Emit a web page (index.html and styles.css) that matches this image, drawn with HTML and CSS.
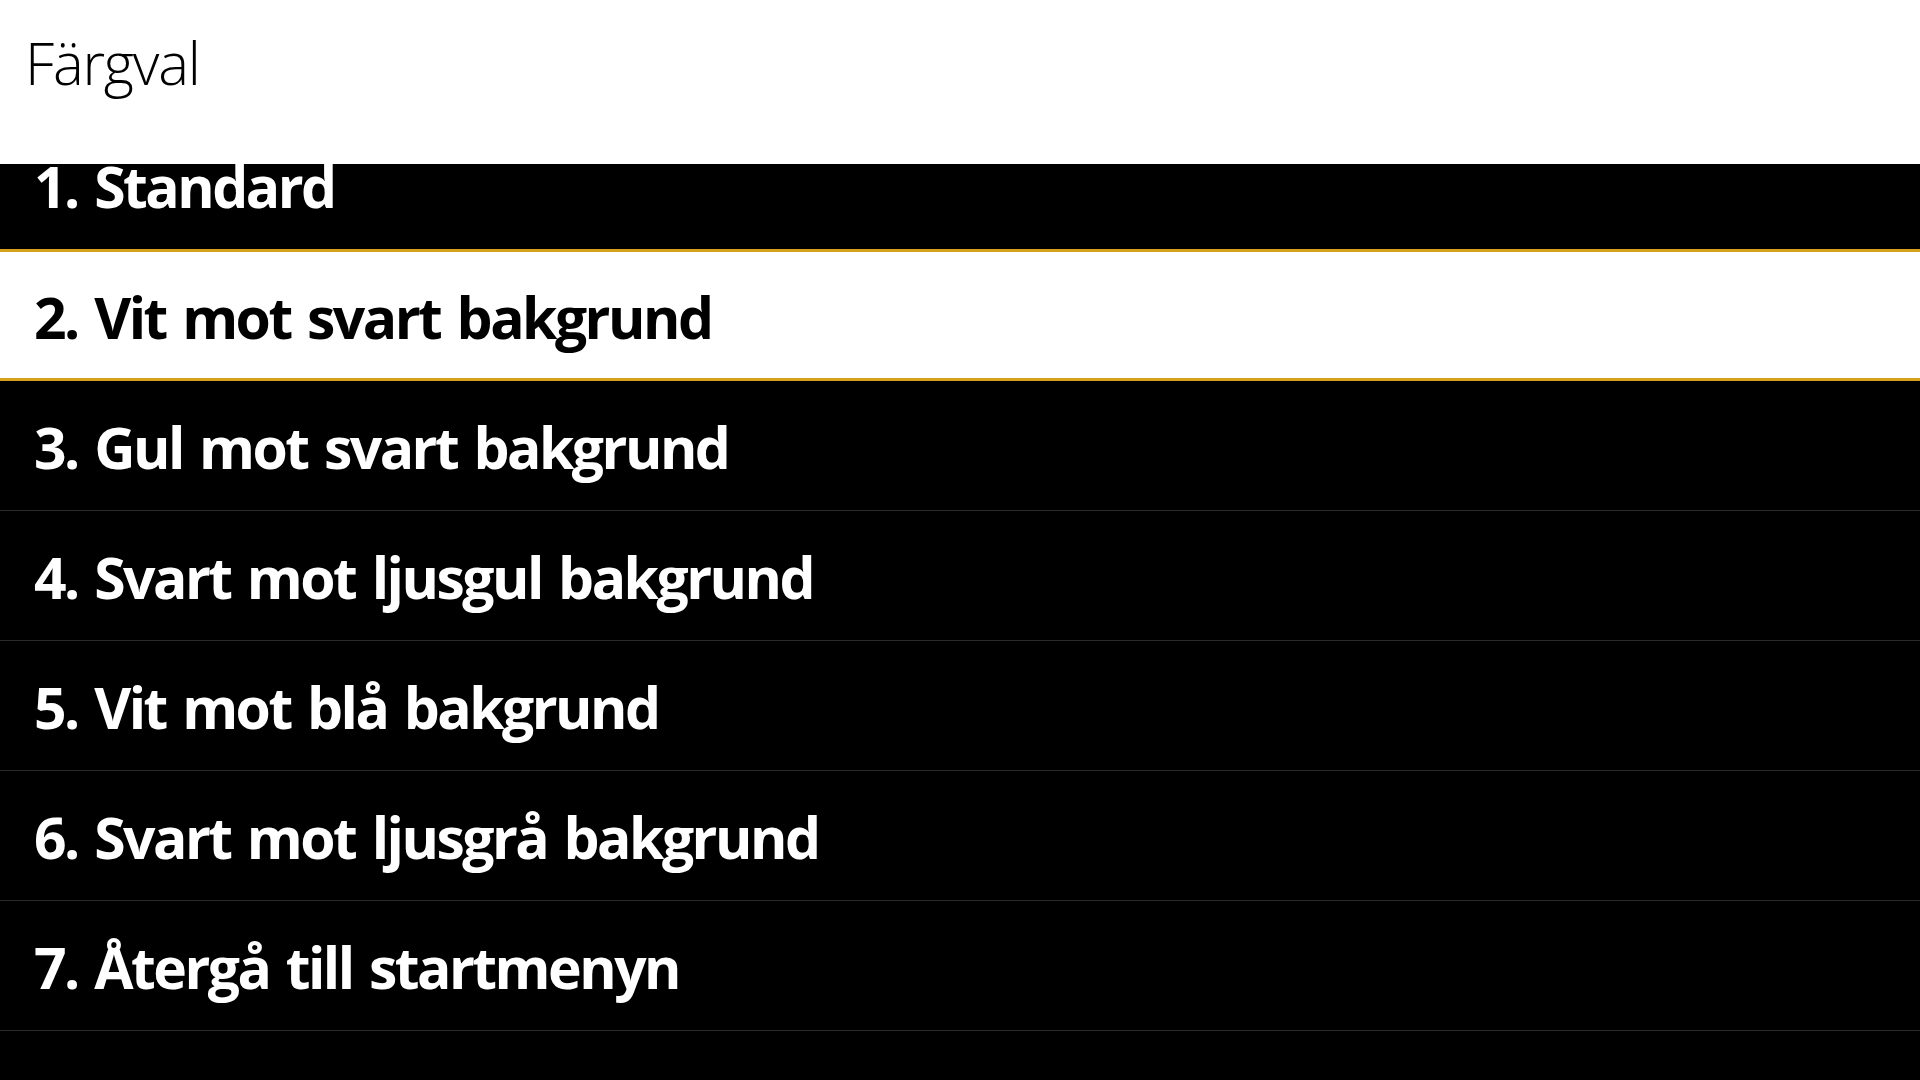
FILE: index.html
```html
<!DOCTYPE html>
<html lang="sv">
<head>
<meta charset="utf-8">
<title>Färgval</title>
<link rel="stylesheet" href="styles.css">
</head>
<body>
<header class="header">
  <h1 class="title">Färgval</h1>
</header>
<main class="viewport">
  <ul class="menu">
    <li class="item first">1. Standard</li>
    <li class="item selected">2. Vit mot svart bakgrund</li>
    <li class="item">3. Gul mot svart bakgrund</li>
    <li class="item">4. Svart mot ljusgul bakgrund</li>
    <li class="item">5. Vit mot blå bakgrund</li>
    <li class="item">6. Svart mot ljusgrå bakgrund</li>
    <li class="item">7. Återgå till startmenyn</li>
  </ul>
</main>
</body>
</html>
```

FILE: styles.css
```css
html, body {
  margin: 0;
  padding: 0;
  width: 1920px;
  height: 1080px;
  overflow: hidden;
  background: #000;
  font-family: "Open Sans", "Noto Sans", sans-serif;
}

.header {
  height: 164px;
  box-sizing: border-box;
  background: #fff;
  padding: 34px 0 0 25px;
}

.title {
  margin: 0;
  font-size: 58px;
  line-height: 58px;
  font-weight: 300;
  letter-spacing: -1.2px;
  color: #000;
}

.viewport {
  height: 916px;
  overflow: hidden;
}

.menu {
  list-style: none;
  margin: 0;
  padding: 0;
}

.item {
  display: flex;
  align-items: center;
  height: 130px;
  box-sizing: border-box;
  padding: 4px 0 0 34px;
  border-bottom: 1px solid #2b2b2b;
  background: #000;
  color: #fff;
  font-size: 57px;
  line-height: 57px;
  font-weight: 700;
  letter-spacing: -2.5px;
  word-spacing: 4px;
  white-space: nowrap;
}

.item.first {
  margin-top: -45px;
  border-bottom: none;
}

.item.selected {
  height: 132px;
  background: #fff;
  color: #000;
  border-top: 3px solid #d6a21e;
  border-bottom: 3px solid #d6a21e;
}
```
